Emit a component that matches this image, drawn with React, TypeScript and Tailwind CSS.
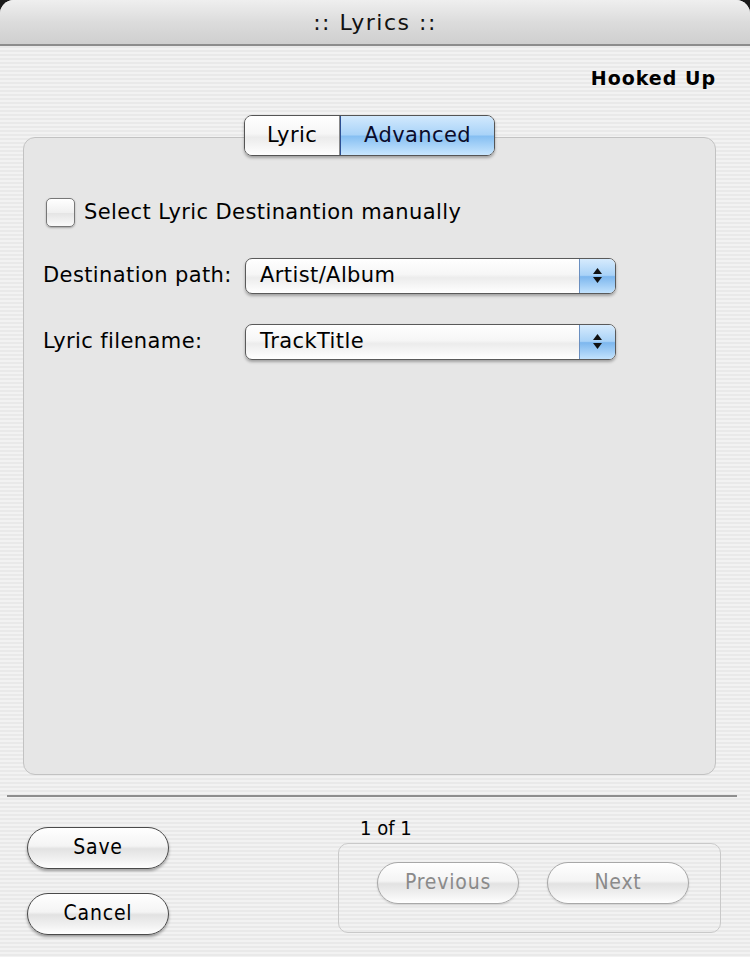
import React from "react";

const font = { fontFamily: '"DejaVu Sans", sans-serif' };

function Pill({ label, disabled, className }: { label: string; disabled?: boolean; className?: string }) {
  return (
    <div
      className={
        "h-[42px] w-[142px] rounded-full flex items-center justify-center text-[21px] tracking-[0.8px] bg-[linear-gradient(#ffffff_0%,#f4f4f4_45%,#e2e2e2_52%,#f2f2f2_80%,#ffffff_100%)] " +
        (disabled
          ? "border border-[#a8a8a8] text-[#8a8a8a] shadow-[0_1px_2px_rgba(0,0,0,0.15)] "
          : "border-[1.5px] border-[#4a4a4a] text-black shadow-[0_2px_3px_rgba(0,0,0,0.35)] ") +
        (className ?? "")
      }
      style={{ fontFamily: '"DejaVu Sans Condensed", "DejaVu Sans", sans-serif' }}
    >
      {label}
    </div>
  );
}

function Popup({ value }: { value: string }) {
  return (
    <div className="h-[36px] w-[371px] rounded-[7px] border border-[#5a5a5a] shadow-[0_2px_3px_rgba(0,0,0,0.3)] flex overflow-hidden bg-[linear-gradient(#ffffff_0%,#f6f6f6_45%,#ececec_55%,#ffffff_100%)]">
      <div className="flex-1 flex items-center pl-[14px] text-black">{value}</div>
      <div className="w-[36px] border-l border-[#6a8fc0] flex flex-col items-center justify-center gap-[3px] bg-[linear-gradient(#d6ebfd_0%,#a9d2f7_48%,#7db7ee_52%,#c2e2fd_100%)]">
        <svg width="9" height="6" viewBox="0 0 9 6"><path d="M4.5 0 L9 6 L0 6 Z" fill="#111" /></svg>
        <svg width="9" height="6" viewBox="0 0 9 6"><path d="M0 0 L9 0 L4.5 6 Z" fill="#111" /></svg>
      </div>
    </div>
  );
}

export default function App() {
  return (
    <div className="w-[750px] h-[957px] bg-[#1a1a1a] overflow-hidden" style={font}>
      <div className="h-full rounded-t-[14px] overflow-hidden flex flex-col bg-[repeating-linear-gradient(180deg,#f2f2f2_0px,#f2f2f2_2px,#e9e9e9_2px,#e9e9e9_4px)]">
        {/* Title bar */}
        <div className="h-[46px] shrink-0 flex items-center justify-center border-b-[2px] border-[#8c8c8c] bg-[linear-gradient(#efefef,#dcdcdc_50%,#cfcfcf)] text-[22px] tracking-[1.5px] text-[#111]">
          :: Lyrics ::
        </div>

        {/* Hooked up */}
        <div className="flex justify-end pr-[34px] pt-[18px] h-[52px] text-[19px] tracking-[1px] font-bold text-black">
          Hooked Up
        </div>

        {/* Tabs */}
        <div className="relative z-10 mt-[17px] ml-[23px] mr-[34px] flex justify-center">
          <div className="flex h-[41px] rounded-[8px] border-[1.5px] border-[#555] shadow-[0_2px_3px_rgba(0,0,0,0.3)] overflow-hidden text-[21px] tracking-[0.4px]">
            <div className="w-[95px] flex items-center justify-center bg-[linear-gradient(#ffffff_0%,#f6f6f6_45%,#ebebeb_55%,#ffffff_100%)] border-r border-[#888]">
              Lyric
            </div>
            <div className="w-[154px] flex items-center justify-center bg-[linear-gradient(#d2e9fd_0%,#a9d3f8_48%,#86bff2_52%,#c8e6fe_100%)] text-[#0b0b2a] border-l border-[#2c4f94]">
              Advanced
            </div>
          </div>
        </div>

        {/* Tab box */}
        <div className="-mt-[19px] ml-[23px] mr-[34px] h-[638px] rounded-[12px] border border-[#c2c2c2] bg-[#e6e6e6] pt-[59px] pl-[22px] text-[21px] tracking-[0.4px]">
          <div className="flex items-center gap-[9px]">
            <div className="w-[29px] h-[29px] rounded-[5px] border border-[#777] bg-[linear-gradient(#ffffff,#f0f0f0_50%,#e4e4e4_52%,#fafafa)] shadow-[0_1px_2px_rgba(0,0,0,0.3)]" />
            <span>Select Lyric Destinantion manually</span>
          </div>
          <div className="mt-[29px] -ml-[3px] flex flex-col gap-[30px]">
            <div className="flex items-center">
              <span className="w-[202px]">Destination path:</span>
              <Popup value="Artist/Album" />
            </div>
            <div className="flex items-center">
              <span className="w-[202px]">Lyric filename:</span>
              <Popup value="TrackTitle" />
            </div>
          </div>
        </div>

        {/* Separator */}
        <div className="mt-[20px] ml-[7px] mr-[13px] h-[2px] bg-[#8e8e8e]" />

        {/* Bottom */}
        <div className="flex pt-[30px] pl-[27px]">
          <div className="flex flex-col gap-[24px]">
            <Pill label="Save" />
            <Pill label="Cancel" />
          </div>
          <div className="ml-[169px] flex flex-col">
            <div
              className="pl-[22px] text-[20px] leading-[22px] -mt-[10px]"
              style={{ fontFamily: '"DejaVu Sans Condensed", "DejaVu Sans", sans-serif' }}
            >
              1 of 1
            </div>
            <div className="mt-[4px] w-[383px] h-[90px] rounded-[10px] border-[1.5px] border-[#c9c9c9] flex items-start gap-[28px] pt-[18px] pl-[38px]">
              <Pill label="Previous" disabled />
              <Pill label="Next" disabled />
            </div>
          </div>
        </div>
      </div>
    </div>
  );
}
